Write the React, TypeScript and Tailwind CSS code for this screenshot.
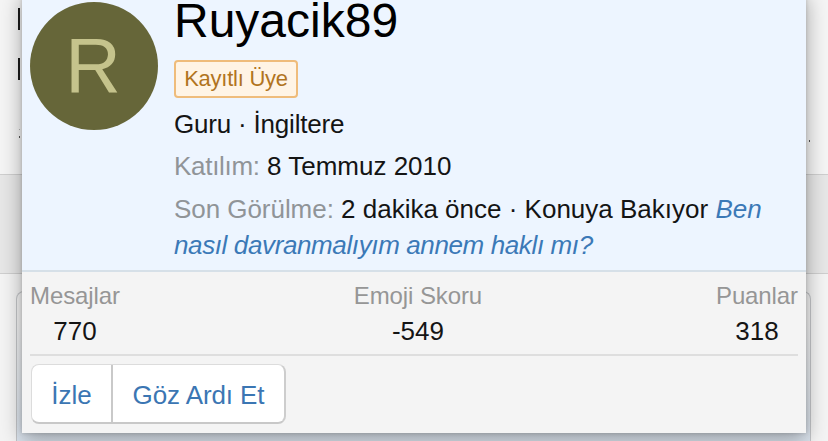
import React from "react";

const stats = [
  { label: "Mesajlar", value: "770" },
  { label: "Emoji Skoru", value: "-549" },
  { label: "Puanlar", value: "318" },
];

const Backdrop = () => {
  return (
    <div className="h-full flex flex-col bg-[#f4f4f4]">
      <div className="h-[175px] shrink-0 bg-[#f5f5f5] border-b border-[#cfcfcf] pl-[18px] pt-2">
        <div className="w-[2px] h-[22px] bg-[#1c1c1c]" />
        <div className="w-[2px] h-[22px] mt-7 bg-[#1c1c1c]" />
        <div className="flex justify-between pt-[49px] pr-[18px]">
          <div className="w-[2px] h-[9px] flex flex-col justify-between items-end">
            <div className="size-px bg-[#b5b5b5]" />
            <div className="w-px h-[2px] bg-[#555]" />
          </div>
          <div className="w-px h-[2px] mt-[11px] bg-[#555]" />
        </div>
      </div>
      <div className="h-[99px] shrink-0 bg-[#e7e7e7] border-b border-[#cfcfcf]" />
      <div className="flex-1 px-4 pt-[17px] pr-[17px]">
        <div className="h-full rounded-t-lg border-x border-t border-[#c4c6c9] bg-gradient-to-b from-[#f4f4f4] from-20% to-[#dce5ef]" />
      </div>
    </div>
  );
};

const Stats = () => {
  return (
    <dl className="flex justify-between h-[84px] pt-[6px] border-b-2 border-[#dedede] text-center leading-9">
      {stats.map((s) => (
        <div key={s.label}>
          <dt className="text-[24px] tracking-[-0.1px] text-[#969696]">
            {s.label}
          </dt>
          <dd className="text-[26px] text-[#141414] -mt-px">{s.value}</dd>
        </div>
      ))}
    </dl>
  );
};

const MemberCard = () => {
  return (
    <div className="absolute left-[22px] -top-2 w-[784px] h-[441px] flex flex-col bg-[#f4f4f4] shadow-[0_6px_20px_rgba(0,0,0,0.35),0_0_4px_rgba(0,0,0,0.15)]">
      <div className="h-[280px] shrink-0 flex gap-4 pl-2 pt-[10px] bg-[#edf5ff] border-b-2 border-[#d6e0e8]">
        <div className="size-32 shrink-0 rounded-full bg-[#666639] flex items-center justify-center text-[77px] text-[#c5c38c]">
          <span className="-translate-x-px">R</span>
        </div>
        <div className="flex-1 text-[26px] leading-9 text-[#141414] whitespace-nowrap">
          <h4 className="-mt-[5px] h-[63px] text-[48px] leading-[48px] text-black">
            Ruyacik89
          </h4>
          <div className="w-[124px] h-[38px] rounded-[4px] border-2 border-[#efbc7b] bg-[#fff4e5] text-[22px] leading-[33px] tracking-[-0.25px] text-center text-[#b1741f]">
            Kayıtlı Üye
          </div>
          <div className="mt-2 tracking-[-0.2px]">Guru · İngiltere</div>
          <div className="mt-[6px]">
            <span className="text-[#909498] tracking-[-0.3px]">Katılım:</span> 8
            Temmuz 2010
          </div>
          <div className="mt-[7px]">
            <span className="text-[#909498] tracking-[-0.05px]">
              Son Görülme:
            </span>{" "}
            2 dakika önce · Konuya Bakıyor{" "}
            <em className="text-[#3b79b7]">Ben</em>
            <br />
            <em className="text-[#3b79b7] tracking-[-0.38px]">
              nasıl davranmalıyım annem haklı mı?
            </em>
          </div>
        </div>
      </div>
      <div className="px-2">
        <Stats />
        <div className="mt-2 ml-px inline-flex h-[60px] rounded-lg bg-white border border-[#dcdcdc] border-r-2 border-r-[#cdcdcd] border-b-2 border-b-[#c8c8c8] text-[26px] text-[#3b76b3]">
          <button className="w-[81px] pt-[3px] border-r-2 border-[#c9c9c9]">
            İzle
          </button>
          <button className="w-[171px] pt-[3px] tracking-[-0.1px]">
            Göz Ardı Et
          </button>
        </div>
      </div>
    </div>
  );
};

const App = () => {
  return (
    <div
      lang="tr"
      className="relative w-full h-[441px] overflow-hidden font-['Liberation_Sans',Arial,sans-serif]"
    >
      <Backdrop />
      <MemberCard />
    </div>
  );
};

export default App;
